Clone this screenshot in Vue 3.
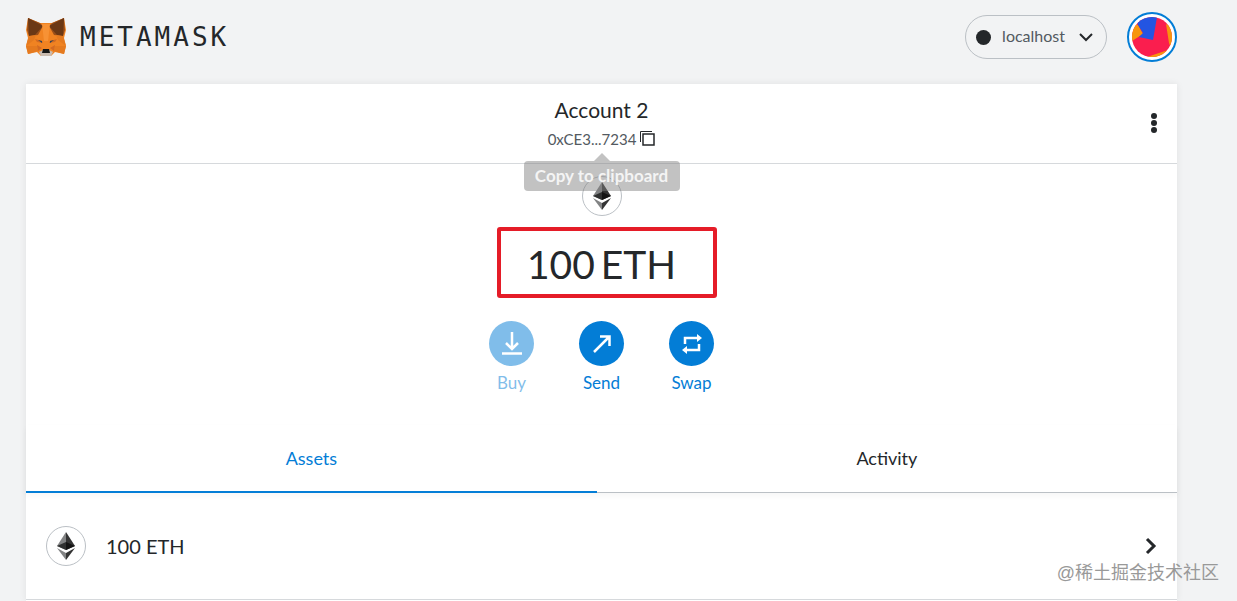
<script setup>
import { ref } from 'vue'

const network = ref('localhost')
const account = ref({ name: 'Account 2', address: '0xCE3...7234' })
const balance = ref({ amount: '100', symbol: 'ETH' })
const activeTab = ref('Assets')
const tabs = ['Assets', 'Activity']
</script>

<template>
  <div class="app">
    <header class="app-header">
      <a href="#" class="logo">
        <svg class="fox" viewBox="0 0 40 40" aria-hidden="true">
          <path fill="#f08322" d="M2 1 14 6h12L38 1l2 12-2 8 2 8-2 8-9-2-4 4H15l-4-4-9 2-2-8 2-8-2-8z" />
          <path fill="#9a4f1a" d="M2 1 14 6l3 3-5 9-9 1-2-6zM38 1 26 6l-3 3 5 9 9 1 2-6z" />
          <path fill="#6b3815" d="M2 1 17 9 9 18l-6 1zM38 1 23 9l8 9 6 1z" />
          <path fill="#e57a1f" d="M3 19 10 18 8 23 0 29zM37 19 30 18l2 5 8 6zM0 29h11l1 5-10 3zM40 29H29l-1 5 10 3z" />
          <path fill="#f79235" d="M16 7h8l-2 17h-4z" />
          <path fill="#d36a22" d="M9 22l7 2 1 2-6-1zM31 22l-7 2-1 2 6-1zM11 28l5 3-4 3zM29 28l-5 3 4 3z" />
          <path fill="#344454" d="M12 23l4 1v2zM28 23l-4 1v2z" />
          <path fill="#c9bbb0" d="M13 35l4-2h6l4 2-2 4H15z" />
          <path fill="#161616" d="M17 32h6l1 4h-8z" />
        </svg>
        <span class="wordmark">METAMASK</span>
      </a>
      <div class="header-right">
        <button class="network" type="button">
          <span class="network-dot"></span>
          <span class="network-name">{{ network }}</span>
          <svg width="14" height="9" viewBox="0 0 14 9" fill="none" stroke="#24272a" stroke-width="2" aria-hidden="true">
            <path d="M1 1l6 6 6-6" />
          </svg>
        </button>
        <button class="avatar" type="button" aria-label="My accounts">
          <svg width="40" height="40" viewBox="0 0 40 40" aria-hidden="true">
            <clipPath id="jazz"><circle cx="20" cy="20" r="20" /></clipPath>
            <g clip-path="url(#jazz)">
              <path fill="#fa1e4e" d="M0 0h40v40H0z" />
              <path fill="#f7960c" d="M0 7 6 8l5 9-11 7zM34 7l6 3v24l-3-8zM15 40l21-7v7z" />
              <path fill="#2355e2" d="M4 0h21l-4 23-14-3 4-4-5-8z" />
            </g>
          </svg>
        </button>
      </div>
    </header>

    <main class="wallet">
      <section class="menu-bar">
        <button class="account" type="button">
          <span class="account-name">{{ account.name }}</span>
          <span class="account-address">
            {{ account.address }}
            <svg width="15" height="15" viewBox="0 0 15 15" fill="none" stroke="#24272a" aria-hidden="true">
              <path stroke-width="1" d="M.5 11V.5H12" />
              <path stroke-width="1.5" d="M3 3h11v11H3z" />
            </svg>
          </span>
          <span class="tooltip" role="tooltip">Copy to clipboard</span>
        </button>
        <button class="options" type="button" aria-label="Account options">
          <svg width="6" height="20" viewBox="0 0 6 20" fill="#24272a" aria-hidden="true">
            <circle cx="3" cy="3" r="3" />
            <circle cx="3" cy="10" r="3" />
            <circle cx="3" cy="17" r="3" />
          </svg>
        </button>
      </section>

      <section class="overview">
        <span class="token">
          <svg width="18" height="28" viewBox="0 0 18 28" aria-hidden="true">
            <path fill="#828384" d="M9 0v18L0 14z" />
            <path fill="#343434" d="M9 0v18l9-4z" />
            <path fill="#2f3030" d="M9 10v8l-9-4z" />
            <path fill="#141414" d="M9 10v8l9-4z" />
            <path fill="#828384" d="M0 16l9 5v7z" />
            <path fill="#343434" d="M18 16l-9 5v7z" />
          </svg>
        </span>
        <div class="balance">
          <span>{{ balance.amount }}</span>
          <span>{{ balance.symbol }}</span>
          <span class="highlight"></span>
        </div>
        <div class="actions">
          <button class="action" type="button" disabled>
            <span class="action-icon">
              <svg width="20" height="23" viewBox="0 0 20 23" fill="none" stroke="#fff" stroke-width="2.5" aria-hidden="true">
                <path d="M10 0v17M4 11l6 6 6-6M0 21.5h20" />
              </svg>
            </span>
            Buy
          </button>
          <button class="action" type="button">
            <span class="action-icon">
              <svg width="18" height="18" viewBox="0 0 18 18" fill="none" stroke="#fff" stroke-width="2.5" aria-hidden="true">
                <path d="M1 17 16 2M7 1.5h9.5V11" />
              </svg>
            </span>
            Send
          </button>
          <button class="action" type="button">
            <span class="action-icon">
              <svg width="20" height="20" viewBox="0 0 20 20" aria-hidden="true">
                <path fill="none" stroke="#fff" stroke-width="2.5" d="M3 10V4h13M17 10v6H4" />
                <path fill="#fff" d="M15 0l5 4-5 4zM5 12l-5 4 5 4z" />
              </svg>
            </span>
            Swap
          </button>
        </div>
      </section>

      <nav class="tabs">
        <button
          v-for="tab in tabs"
          :key="tab"
          type="button"
          class="tab"
          :class="{ active: tab === activeTab }"
          @click="activeTab = tab"
        >
          {{ tab }}
        </button>
      </nav>

      <button class="asset" type="button">
        <span class="token">
          <svg width="18" height="28" viewBox="0 0 18 28" aria-hidden="true">
            <path fill="#828384" d="M9 0v18L0 14z" />
            <path fill="#343434" d="M9 0v18l9-4z" />
            <path fill="#2f3030" d="M9 10v8l-9-4z" />
            <path fill="#141414" d="M9 10v8l9-4z" />
            <path fill="#828384" d="M0 16l9 5v7z" />
            <path fill="#343434" d="M18 16l-9 5v7z" />
          </svg>
        </span>
        <span class="asset-amount">{{ balance.amount }} {{ balance.symbol }}</span>
        <svg width="12" height="18" viewBox="0 0 12 18" fill="none" stroke="#24272a" stroke-width="3" aria-hidden="true">
          <path d="M2 2l7 7-7 7" />
        </svg>
      </button>
    </main>

    <span class="watermark">@稀土掘金技术社区</span>
  </div>
</template>

<style>
body {
  margin: 0;
  background: #f2f3f4;
}
</style>

<style scoped>
.app {
  position: relative;
  box-sizing: border-box;
  min-height: 100vh;
  padding: 0 60px 0 26px;
  overflow: hidden;
  font-family: Lato, "Noto Sans CJK SC", sans-serif;
  color: #24272a;
}

button {
  padding: 0;
  border: none;
  background: none;
  font: inherit;
  color: inherit;
  cursor: pointer;
}

.app-header {
  display: flex;
  align-items: center;
  justify-content: space-between;
  height: 74px;
  margin-bottom: 10px;
}

.logo {
  display: flex;
  align-items: center;
  gap: 14px;
  color: #24272a;
  text-decoration: none;
}

.fox {
  width: 40px;
  height: 40px;
}

.wordmark {
  font-family: "DejaVu Sans Mono", monospace;
  font-size: 26px;
  line-height: 32px;
  letter-spacing: 3px;
}

.header-right {
  display: flex;
  align-items: center;
  gap: 20px;
}

.network {
  display: flex;
  align-items: center;
  height: 44px;
  padding: 0 13px 0 10px;
  border: 1px solid #bbc0c5;
  border-radius: 22px;
  font-size: 16px;
  line-height: 24px;
  color: #535a61;
}

.network-dot {
  width: 15px;
  height: 15px;
  border-radius: 50%;
  background: #24272a;
}

.network-name {
  margin: 0 14px 2px 11px;
}

.avatar {
  display: flex;
  align-items: center;
  justify-content: center;
  box-sizing: border-box;
  width: 50px;
  height: 50px;
  border: 2px solid #037dd6;
  border-radius: 50%;
  background: #fff;
}

.wallet {
  min-height: calc(100vh - 84px);
  background: #fff;
  box-shadow: 0 0 7px rgba(0, 0, 0, 0.08);
}

.menu-bar {
  display: grid;
  grid-template-columns: 1fr auto 1fr;
  align-items: center;
  height: 79px;
  border-bottom: 1px solid #d6d9dc;
}

.account {
  position: relative;
  grid-column: 2;
  display: flex;
  flex-direction: column;
  align-items: center;
  gap: 4px;
}

.account-name {
  font-size: 21px;
  line-height: 26px;
}

.account-address {
  display: flex;
  align-items: center;
  gap: 4px;
  font-size: 15px;
  line-height: 24px;
  color: #535a61;
}

.tooltip {
  position: absolute;
  top: 64px;
  left: 50%;
  z-index: 1;
  box-sizing: border-box;
  width: 156px;
  border-radius: 4px;
  background: rgba(128, 128, 128, 0.48);
  font-size: 17px;
  line-height: 30px;
  font-weight: bold;
  color: #f4f4f4;
  text-align: center;
  white-space: nowrap;
  transform: translateX(-50%);
}

.tooltip::before {
  content: "";
  position: absolute;
  bottom: 100%;
  left: 50%;
  margin-left: -8px;
  border: 8px solid transparent;
  border-top: none;
  border-bottom-color: rgba(128, 128, 128, 0.48);
}

.options {
  justify-self: end;
  display: flex;
  padding: 8px 20px 10px;
}

.overview {
  display: flex;
  flex-direction: column;
  align-items: center;
  padding-top: 12px;
}

.token {
  display: flex;
  align-items: center;
  justify-content: center;
  box-sizing: border-box;
  width: 40px;
  height: 40px;
  border: 1px solid #bbc0c5;
  border-radius: 50%;
  background: #fff;
}

.balance {
  position: relative;
  display: flex;
  gap: 6px;
  padding: 20px 0 29px;
  font-size: 39px;
  line-height: 56px;
}

.highlight {
  position: absolute;
  top: 11px;
  left: 50%;
  box-sizing: border-box;
  width: 220px;
  height: 71px;
  margin-left: -105px;
  border: 4px solid #e51c28;
  border-radius: 3px;
}

.actions {
  display: flex;
  gap: 30px;
}

.action {
  display: flex;
  flex-direction: column;
  align-items: center;
  gap: 5px;
  width: 60px;
  font-size: 17px;
  line-height: 24px;
  color: #037dd6;
}

.action:disabled {
  opacity: 0.5;
  cursor: default;
}

.action-icon {
  display: flex;
  align-items: center;
  justify-content: center;
  width: 45px;
  height: 45px;
  border-radius: 50%;
  background: #037dd6;
}

.tabs {
  display: flex;
  margin-top: 30px;
  border-bottom: 1px solid #bbc0c5;
  box-shadow: 0 3px 6px rgba(0, 0, 0, 0.04);
}

.tab {
  flex: 1 1 auto;
  margin-bottom: -1px;
  padding: 20px 0;
  border-bottom: 2px solid transparent;
  font-size: 18px;
  line-height: 26px;
}

.tab.active {
  border-bottom-color: #037dd6;
  color: #037dd6;
}

.asset {
  display: flex;
  align-items: center;
  gap: 20px;
  width: 100%;
  height: 107px;
  padding: 0 20px;
  border-bottom: 1px solid #d6d9dc;
  font-size: 20px;
}

.asset-amount {
  flex: 1;
  text-align: left;
}

.watermark {
  position: absolute;
  right: 18px;
  bottom: 15px;
  font-family: "Liberation Sans", "Noto Sans CJK SC", sans-serif;
  font-size: 18px;
  line-height: 26px;
  color: #999;
}
</style>
